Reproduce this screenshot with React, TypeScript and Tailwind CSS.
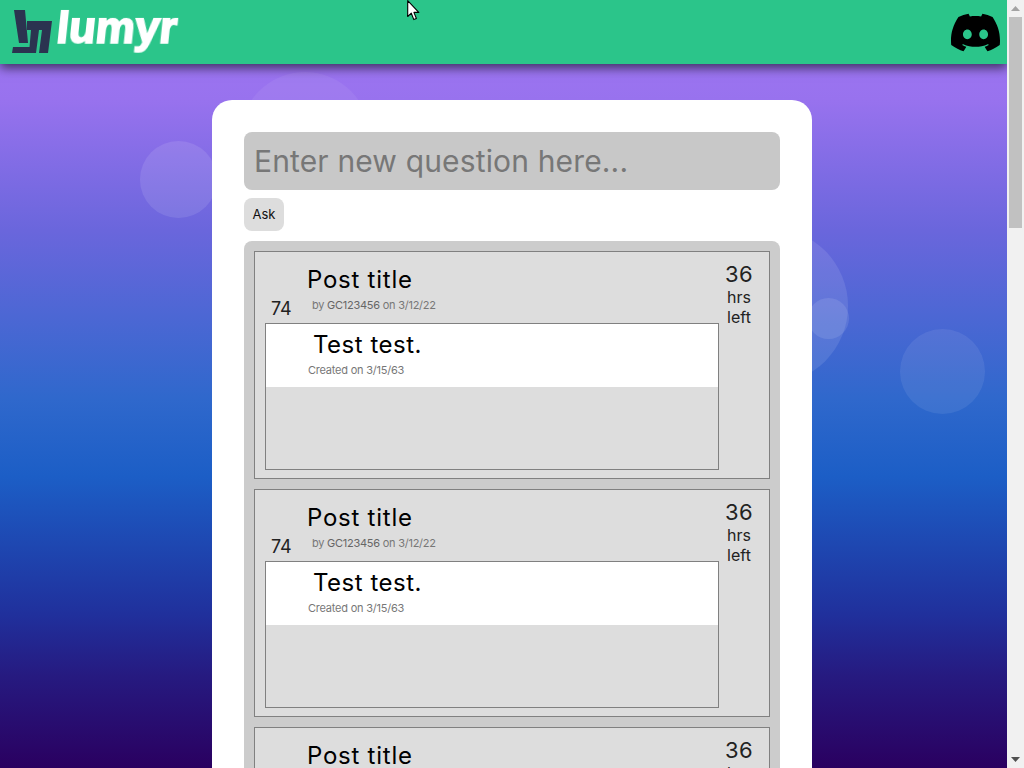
import { SiDiscord } from "react-icons/si";

const font = { fontFamily: '"Inter", "Open Sans", sans-serif' };

function Post() {
  return (
    <div className="flex h-[228px] border border-[#808080] bg-[#dddddd] pl-[10px] pr-[8px]">
      <div className="flex w-[454px] flex-col pb-2">
        <div className="flex h-[71px] shrink-0">
          <div className="flex w-[42px] items-end pb-[2px] pl-[6px] text-[18px] leading-[24px] tracking-[-0.2px] text-[#222222]">74</div>
          <div className="flex flex-col pt-[12px]">
            <div className="text-[24px] leading-[32px] tracking-[0.75px] text-black">Post title</div>
            <div className="pl-[5px] pt-[2px] text-[11px] leading-[14px] tracking-[-0.25px] text-[#777777]">
              by <span className="text-[#666666]">GC123456</span> on 3/12/22
            </div>
          </div>
        </div>
        <div className="flex-1 border border-[#808080]">
          <div className="h-[63px] bg-white pl-[42px]">
            <div className="pl-[5px] pt-[5px] text-[24px] leading-[32px] tracking-[0.5px] text-black">Test test.</div>
            <div className="pt-[2px] text-[11px] leading-[14px] tracking-[-0.22px] text-[#777777]">Created on 3/15/63</div>
          </div>
        </div>
      </div>
      <div className="flex flex-1 flex-col items-center pr-[2px] pt-[10px] text-[#222222]">
        <div className="text-[22px] leading-[25px] tracking-[0.3px]">36</div>
        <div className="text-[16px] leading-[20px]">hrs</div>
        <div className="text-[16px] leading-[20px]">left</div>
      </div>
    </div>
  );
}

export default function App() {
  return (
    <div style={font} className="min-h-screen">
      <div className="fixed inset-y-0 left-0 right-[17px] -z-10 overflow-hidden bg-[linear-gradient(180deg,#a278f6_0%,#9872ee_13%,#6a66dc_30%,#2f68cc_52%,#1c5ec6_62%,#20309c_80%,#261a80_88%,#2a0060_100%)]">
        <div className="absolute left-[140px] top-[141px] h-[77px] w-[77px] rounded-full bg-white/10" />
        <div className="absolute left-[240px] top-[72px] h-[130px] w-[130px] rounded-full bg-white/[0.06]" />
        <div className="absolute left-[692px] top-[228px] h-[156px] w-[156px] rounded-full bg-white/10" />
        <div className="absolute left-[808px] top-[298px] h-[41px] w-[41px] rounded-full bg-white/10" />
        <div className="absolute left-[900px] top-[329px] h-[85px] w-[85px] rounded-full bg-white/[0.08]" />
      </div>
      <header className="mr-[17px] flex h-16 items-center justify-between bg-[#2bc58a] pl-[8px] pr-[7px] shadow-[0_4px_10px_rgba(0,0,0,0.6)]">
        <div className="flex items-center">
          <svg width="50" height="52" viewBox="0 0 50 52" aria-hidden="true">
            <path
              d="M6 4 H17 L20 37 H11 Z M5 41 H25 L24 47 H4 Z M19 15 H44 L40 47 H31 L34 24 H31 L28 47 H21 L23 24 H19 Z"
              fill="#2b3350"
            />
          </svg>
          <span
            className="ml-[-1px] mt-[-8px] inline-block -skew-x-[6deg] text-[44px] font-bold leading-none text-white [-webkit-text-stroke:2px_white]"
            style={{ fontFamily: '"Liberation Sans", sans-serif' }}
          >
            lumyr
          </span>
        </div>
        <SiDiscord size={49} className="text-black" />
      </header>
      <main className="ml-[212px] mt-9 w-[600px] rounded-[20px] bg-white p-8">
        <input
          placeholder="Enter new question here..."
          className="h-[58px] w-full rounded-lg bg-[#c8c8c8] px-[10px] text-[30px] tracking-[0.15px] outline-none placeholder:text-[#777777]"
        />
        <button className="mt-2 block h-[33px] w-10 rounded-lg bg-[#dddddd] text-[13px] text-[#111111]">Ask</button>
        <div className="mt-[10px] flex flex-col gap-[10px] rounded-lg bg-[#cccccc] p-[10px]">
          {Array.from({ length: 10 }, (_, i) => (
            <Post key={i} />
          ))}
        </div>
      </main>
      <div className="h-2" />

      <div className="fixed inset-y-0 right-0 flex w-[17px] flex-col items-center bg-[#f1f1f1]">
        <div className="flex h-[17px] w-full items-center justify-center">
          <svg width="9" height="5" viewBox="0 0 9 5" aria-hidden="true"><path d="M4.5 0 L9 5 H0 Z" fill="#a3a3a3" /></svg>
        </div>
        <div className="h-[211px] w-[13px] bg-[#c1c1c1]" />
        <div className="flex-1" />
        <div className="flex h-[17px] w-full items-center justify-center">
          <svg width="9" height="5" viewBox="0 0 9 5" aria-hidden="true"><path d="M0 0 H9 L4.5 5 Z" fill="#505050" /></svg>
        </div>
      </div>

      <svg width="14" height="21" viewBox="0 0 14 21" className="fixed left-[407px] top-0" aria-hidden="true">
        <path d="M0.7 0.7 V16.5 L4.3 13.2 L6.8 19.6 L9.4 18.5 L6.9 12.4 H11.8 Z" fill="white" stroke="black" strokeWidth="1.1" strokeLinejoin="round" />
      </svg>
    </div>
  );
}
